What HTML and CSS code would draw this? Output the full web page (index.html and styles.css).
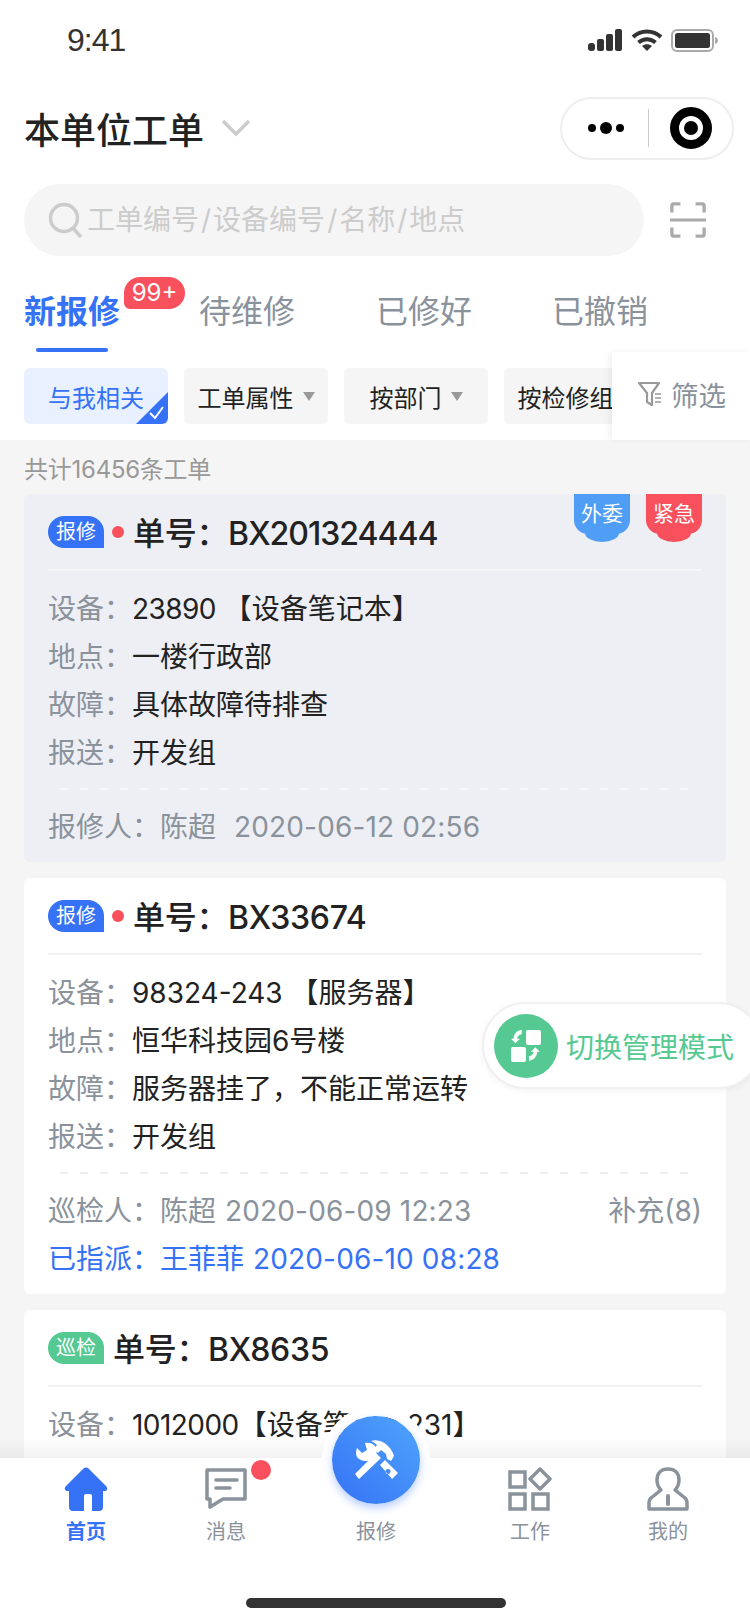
FILE: index.html
```html
<!DOCTYPE html>
<html lang="zh-CN">
<head>
  <meta charset="UTF-8" />
  <meta name="viewport" content="width=device-width, initial-scale=1.0"/>
  <title>本单位工单</title>
  <link rel="stylesheet" href="styles.css">
</head>
<body>
  <div class="page">
    <div class="top">
      <div class="status-bar">
        <span class="time">9:41</span>
        <div class="status-icons">
          <svg width="35" height="22" viewBox="0 0 35 22" fill="#333">
            <rect x="0" y="14" width="7" height="8" rx="3"/>
            <rect x="9" y="10" width="7" height="12" rx="2"/>
            <rect x="18" y="5" width="7" height="17" rx="2"/>
            <rect x="27" y="0" width="7" height="22" rx="2"/>
          </svg>
          <svg width="32" height="22" viewBox="0 0 32 22" fill="none" stroke="#333" stroke-width="4">
            <path d="M2 8c8-7.500 20-7.500 28 0"/>
            <path d="M7.500 13.500c5-4.500 12-4.500 17 0"/>
            <path d="M16 22l-5-5c3-2.500 7-2.500 10 0z" fill="#333" stroke="none"/>
          </svg>
          <svg width="47" height="23" viewBox="0 0 47 23">
            <rect x="1" y="1" width="41" height="21" rx="5" fill="none" stroke="#aaa" stroke-width="2"/>
            <rect x="4" y="4" width="35" height="15" rx="2.500" fill="#333"/>
            <path d="M44 8c2 .5 3 2 3 3.500s-1 3-3 3.500z" fill="#aaa"/>
          </svg>
        </div>
      </div>

      <div class="title-bar">
        <div class="title">本单位工单
          <svg class="chevron" width="30" height="18" viewBox="0 0 30 18" fill="none" stroke="#ccc" stroke-width="3.500"><path d="M2 2l13 13L28 2"/></svg>
        </div>
        <div class="capsule">
          <svg width="38" height="14" viewBox="0 0 38 14" fill="#000"><circle cx="5" cy="7" r="4"/><circle cx="19" cy="7" r="6"/><circle cx="33" cy="7" r="4"/></svg>
          <i class="capsule-sep"></i>
          <svg width="42" height="42" viewBox="0 0 42 42"><circle cx="21" cy="21" r="16.500" fill="none" stroke="#000" stroke-width="9"/><circle cx="21" cy="21" r="7" fill="#000"/></svg>
        </div>
      </div>

      <div class="search-row">
        <div class="search">
          <svg width="36" height="36" viewBox="0 0 36 36" fill="none" stroke="#ccc" stroke-width="3.500"><circle cx="16" cy="16" r="13.500"/><path d="M25 26l7 8" stroke-linecap="round"/></svg>
          <span>工单编号<i class="slash">/</i>设备编号<i class="slash">/</i>名称<i class="slash">/</i>地点</span>
        </div>
        <svg class="scan" width="36" height="36" viewBox="0 0 38 38" fill="none" stroke="#aaa" stroke-width="3.500">
          <path d="M2 11V4q0-2 2-2h7M27 2h7q2 0 2 2v7M2 27v7q0 2 2 2h7M27 36h7q2 0 2-2v-7"/>
          <path d="M0 19h38" stroke-width="3"/>
        </svg>
      </div>

      <div class="tabs">
        <div class="tab active">新报修<span class="tab-badge">99+</span></div>
        <div class="tab">待维修</div>
        <div class="tab">已修好</div>
        <div class="tab">已撤销</div>
      </div>

      <div class="chips">
        <div class="chip chip-on">与我相关
          <svg class="chip-check" width="32" height="32" viewBox="0 0 32 32"><path d="M32 0v32H0z" fill="#3572f6"/><path d="M14 21l5 5 8-11" fill="none" stroke="#fff" stroke-width="2"/></svg>
        </div>
        <div class="chip">工单属性<i class="caret"></i></div>
        <div class="chip">按部门<i class="caret"></i></div>
        <div class="chip">按检修组<i class="caret"></i></div>
        <div class="filter">
          <svg width="24" height="26" viewBox="0 0 24 26" fill="none" stroke="#999" stroke-width="2.200" stroke-linejoin="round"><path d="M1 2h20l-7 10v12l-5-3v-9z"/><path d="M17 13h6M17 17h6M17 21h6" stroke-width="1.500"/></svg>
          <span>筛选</span>
        </div>
      </div>
    </div>

    <div class="list">
      <div class="count">共计16456条工单</div>

      <div class="card card-read">
        <div class="card-head">
          <span class="kind">报修</span><i class="dot"></i>
          <span class="no">单号：<span class="no-long">BX201324444</span></span>
        </div>
        <span class="ribbon ribbon-blue">外委</span>
        <span class="ribbon ribbon-red">紧急</span>
        <div class="rows">
          <div class="row"><label>设备：</label><span class="tight">23890</span> 【设备笔记本】</div>
          <div class="row"><label>地点：</label>一楼行政部</div>
          <div class="row"><label>故障：</label>具体故障待排查</div>
          <div class="row"><label>报送：</label>开发组</div>
        </div>
        <div class="dash"></div>
        <div class="foot"><span>报修人：<b class="who">陈超</b><b class="when wide">2020-06-12 02:56</b></span></div>
      </div>

      <div class="card">
        <div class="card-head">
          <span class="kind">报修</span><i class="dot"></i>
          <span class="no">单号：BX33674</span>
        </div>
        <div class="rows">
          <div class="row"><label>设备：</label>98324-243 【服务器】</div>
          <div class="row"><label>地点：</label>恒华科技园6号楼</div>
          <div class="row"><label>故障：</label>服务器挂了，不能正常运转</div>
          <div class="row"><label>报送：</label>开发组</div>
        </div>
        <div class="dash"></div>
        <div class="foot"><span>巡检人：<b class="who">陈超</b><b class="when">2020-06-09 12:23</b></span><span>补充(8)</span></div>
        <div class="foot foot-blue"><span>已指派：<b class="who">王菲菲</b><b class="when">2020-06-10 08:28</b></span></div>
      </div>

      <div class="card card-last">
        <div class="card-head">
          <span class="kind kind-green">巡检</span>
          <span class="no">单号：BX8635</span>
        </div>
        <div class="rows">
          <div class="row"><label>设备：</label><span class="tight">1012000</span>【设备笔记本231】</div>
        </div>
      </div>
    </div>

    <div class="switch-mode">
      <span class="switch-icon">
        <svg width="34" height="34" viewBox="0 0 34 34" fill="#fff">
          <rect x="17" y="1" width="15" height="15" rx="2"/>
          <rect x="2" y="18" width="15" height="15" rx="2"/>
          <path d="M13 2v5c-3 .5-5 2-5 5h3l-5 5-5-5h3c0-5 3-9 9-10z" transform="translate(1 -1) scale(.9)"/>
          <path d="M20 32v-5c3-.5 5-2 5-5h-3l5-5 5 5h-3c0 5-3 9-9 10z" transform="translate(2 3) scale(.9)"/>
        </svg>
      </span>
      切换管理模式
    </div>

    <div class="tabbar">
      <div class="nav nav-on">
        <svg width="44" height="44" viewBox="0 0 44 44" fill="#3572f6"><path d="M19.500 1.500q2.500-2 5 0l18 18q2 3-1 4.500h-2.500v16q0 4-4 4h-7V29q0-2-2-2h-4q-2 0-2 2v15H9q-4 0-4-4V24H2.500q-3-1.500-1-4.500z"/></svg>
        <span>首页</span>
      </div>
      <div class="nav">
        <svg width="44" height="44" viewBox="0 0 44 44" fill="none" stroke="#8a929c" stroke-width="3.500" stroke-linejoin="round"><path d="M3 3h38v29H19l-13 8v-8H3z"/><path d="M12 13h21M12 21h14" stroke-linecap="round"/></svg>
        <i class="nav-dot"></i>
        <span>消息</span>
      </div>
      <div class="nav nav-fab">
        <span class="fab">
          <svg width="44" height="44" viewBox="0 0 44 44" fill="#fff">
            <path d="M5 40l-3-4 20-20 4 4z" stroke="#fff" stroke-width="1.500" stroke-linejoin="round"/>
            <path d="M17 3c6-2 12 0 17 5 3 3 5 6 6 10l-3 5-4-2-1-5-5-4-3 3-4-4 3-4q-3-3-6-4z"/>
            <path d="M3 10l5 5 5-3-2-7c3-1 8 0 10 3s2 6 1 9l-5 5C12 24 6 23 3 19q-2-4 0-9z"/>
            <path d="M26 27l5-5 13 13-6 6zM34 31a2.500 2.500 0 1 0 .1 0z" fill-rule="evenodd"/>
          </svg>
        </span>
        <span>报修</span>
      </div>
      <div class="nav">
        <svg width="44" height="44" viewBox="0 0 44 44" fill="none" stroke="#8a929c" stroke-width="3.500">
          <rect x="2" y="5" width="15" height="15"/>
          <rect x="2" y="27" width="15" height="15"/>
          <rect x="25" y="27" width="15" height="15"/>
          <path d="M32 2l10 10-10 10-10-10z" stroke-linejoin="round"/>
        </svg>
        <span>工作</span>
      </div>
      <div class="nav">
        <svg width="44" height="44" viewBox="0 0 44 44" fill="none" stroke="#8a929c" stroke-width="3.500" stroke-linejoin="round"><path d="M3 42v-7q0-2 2-4l10-8q-4-4-4-10C11 6 15 2 22 2s11 4 11 11q0 6-4 10l10 8q2 2 2 4v7z"/><path d="M22 29v8" stroke-width="4" stroke-linecap="round"/></svg>
        <span>我的</span>
      </div>
      <div class="home-bar"></div>
    </div>
  </div>
</body>
</html>
```

FILE: styles.css
```css
* { box-sizing: border-box; }
body { margin: 0; background: #f5f5f5; font-family: Inter, "Noto Sans CJK SC", sans-serif; color: #222; }
.page { position: relative; width: 750px; height: 1624px; overflow: hidden; background: #f5f5f5; }

.top { background: #fff; height: 440px; }
.status-bar { height: 82px; display: flex; justify-content: space-between; align-items: center; padding: 0 32px 2px 67px; }
.time { font-family: "Liberation Sans", sans-serif; font-size: 32px; letter-spacing: -1px; color: #333; }
.status-icons { display: flex; align-items: center; gap: 8px; }

.title-bar { height: 92px; display: flex; justify-content: space-between; align-items: center; padding: 0 16px 0 24px; }
.title { font-size: 36px; font-weight: 500; display: flex; align-items: center; gap: 17px; }
.capsule { width: 174px; height: 63px; border: 2px solid #eee; border-radius: 32px; display: flex; align-items: center; padding-left: 25px; }
.capsule-sep { width: 1px; height: 38px; background: #ccc; margin: 0 21px 0 23px; }

.search-row { display: flex; align-items: center; padding: 10px 42px 0 24px; gap: 26px; }
.search { width: 620px; height: 72px; border-radius: 36px; background: #f5f5f5; display: flex; align-items: center; gap: 3px; padding-left: 24px; font-size: 28px; color: #ccc; }
.search span { margin-bottom: 4px; }
.slash { font-style: normal; margin: 0 2px; }

.tabs { display: grid; grid-template-columns: 175px 177px 176px 177px; grid-template-rows: 96px; padding: 0 24px; height: 96px; margin-bottom: 16px; }
.tab { position: relative; font-size: 32px; line-height: 112px; color: #8a929c; }
.tab.active { color: #3572f6; font-weight: 600; }
.tab.active::after { content: ""; position: absolute; left: 12px; bottom: 0; width: 72px; height: 4px; border-radius: 2px; background: #3572f6; }
.tab-badge { position: absolute; left: 100px; top: 21px; width: 61px; height: 32px; border-radius: 16px 16px 16px 6px; background: #f8505c; color: #fff; font-size: 24px; font-weight: 400; line-height: 32px; text-align: center; }

.chips { position: relative; display: flex; gap: 16px; padding-left: 24px; }
.chip { position: relative; width: 144px; height: 56px; flex-shrink: 0; border-radius: 6px; background: #f5f5f5; font-size: 24px; color: #222; display: flex; align-items: center; justify-content: center; gap: 9px; overflow: hidden; }
.chip-on { background: #e9f0ff; color: #3572f6; }
.chip-check { position: absolute; right: 0; bottom: 0; }
.caret { width: 0; height: 0; border: 6px solid transparent; border-top: 9px solid #999; border-bottom: 0; }
.filter { position: absolute; right: 0; top: -16px; width: 138px; height: 88px; background: #fff; box-shadow: -3px 0 6px rgba(0,0,0,0.06); display: flex; align-items: center; gap: 9px; padding: 0 0 5px 26px; font-size: 27.5px; color: #8a929c; }

.list { padding: 0 24px; }
.count { height: 54px; font-size: 24px; line-height: 60px; letter-spacing: -0.25px; color: #999; }
.card { position: relative; background: #fff; border-radius: 6px; padding: 0 24px; margin-bottom: 16px; }
.card-read { background: #edeff4; }
.card-read .card-head { border-color: #f5f6f8; }
.card-read .dash { background-image: repeating-linear-gradient(90deg, #f7f8fa 0 8px, transparent 8px 20px); }
.card-last { height: 240px; }
.card-head { height: 77px; display: flex; align-items: center; border-bottom: 2px solid #f2f2f2; }
.kind { width: 56px; height: 32px; border-radius: 16px 16px 0 16px; background: #3572f6; color: #fff; font-size: 20px; line-height: 32px; text-align: center; }
.kind-green { background: #55c991; margin-right: 9px; }
.dot { width: 12px; height: 12px; border-radius: 50%; background: #f8505c; margin: 0 9px 0 8px; }
.no { font-size: 32px; font-weight: 500; letter-spacing: -0.3px; margin-top: -2px; }
.no-long { letter-spacing: -1px; }
.ribbon { position: absolute; top: 0; width: 56px; height: 40px; border-radius: 0 0 14px 14px; color: #fff; font-size: 21px; line-height: 40px; text-align: center; }
.ribbon::after { content: ""; position: absolute; left: 11px; bottom: -8px; width: 34px; height: 18px; border-radius: 50%; background: inherit; z-index: -1; }
.ribbon-blue { right: 96px; background: #4f9df5; }
.ribbon-red { right: 24px; background: #f8505c; }
.card-read .ribbon { z-index: 1; }
.rows { padding-top: 14px; }
.row { height: 48px; font-size: 28px; line-height: 48px; display: flex; white-space: pre; }
.row label { width: 84px; color: #8a929c; }
.tight { letter-spacing: -0.55px; }
.dash { height: 2px; margin: 11px 12px 0; background-image: repeating-linear-gradient(90deg, #eee 0 8px, transparent 8px 20px); }
.foot { height: 48px; display: flex; justify-content: space-between; font-size: 28px; line-height: 48px; color: #8a929c; }
.dash + .foot { margin-top: 13px; }
.foot b { font-weight: 400; }
.when { margin-left: 9px; letter-spacing: 0.15px; }
.when.wide { margin-left: 18px; }
.foot-blue { color: #3572f6; height: 59px; }
.card-read .foot { height: 59px; }

.switch-mode { position: absolute; left: 482px; top: 1002px; width: 280px; height: 87px; border: 2px solid #f0f0f0; border-radius: 44px; background: #fff; box-shadow: 0 2px 6px rgba(0,0,0,0.05); display: flex; align-items: center; gap: 8px; padding-left: 10px; font-size: 28px; color: #55c991; }
.switch-icon { width: 64px; height: 64px; border-radius: 50%; background: #55c991; display: flex; align-items: center; justify-content: center; }

.tabbar { position: absolute; left: 0; right: 0; bottom: 0; height: 166px; background: #fff; display: grid; grid-template-columns: 140px 140px 160px 148px 128px; grid-template-rows: 104px; padding: 9px 0 0 16px; }
.tabbar::before { content: ""; position: absolute; left: 0; right: 0; top: -20px; height: 20px; background: linear-gradient(rgba(0,0,0,0), rgba(0,0,0,0.05)); }
.nav { position: relative; display: flex; flex-direction: column; align-items: center; gap: 7px; font-size: 20px; line-height: 28px; color: #8a929c; }
.nav-on { color: #3572f6; font-weight: 600; }
.nav-dot { position: absolute; left: 95px; top: -7px; width: 20px; height: 20px; border-radius: 50%; background: #f8505c; }
.nav-fab { padding-top: 51px; }
.fab { position: absolute; left: 36px; top: -51px; width: 88px; height: 88px; border-radius: 50%; background: linear-gradient(45deg, #3572f6, #4fa5fc); box-shadow: 0 4px 8px rgba(53,114,246,0.35), 0 0 0 10px #fff; display: flex; align-items: center; justify-content: center; }
.home-bar { position: absolute; left: 246px; bottom: 16px; width: 260px; height: 10px; border-radius: 5px; background: #333; }
```
